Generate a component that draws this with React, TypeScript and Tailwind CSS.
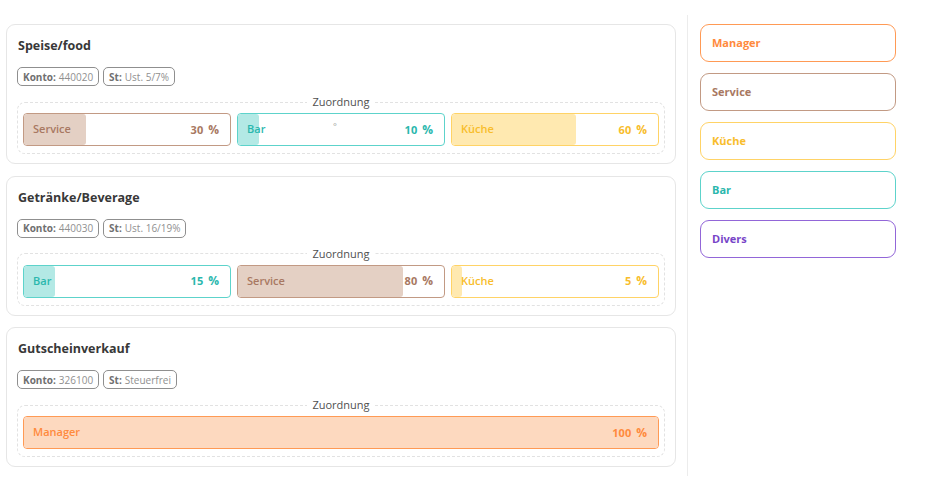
import type { ReactNode } from "react";

type Tone = "manager" | "service" | "kueche" | "bar" | "divers";

const TONES: Record<Tone, { border: string; fill: string; text: string }> = {
  manager: { border: "border-[#ff9a55]", fill: "bg-[#fdd9bf]", text: "text-[#ff8a3d]" },
  service: { border: "border-[#c29a84]", fill: "bg-[#e4d0c4]", text: "text-[#a87862]" },
  kueche: { border: "border-[#ffd366]", fill: "bg-[#ffe9b0]", text: "text-[#f8bd2c]" },
  bar: { border: "border-[#5dd3cb]", fill: "bg-[#b3e9e5]", text: "text-[#2ab7ad]" },
  divers: { border: "border-[#9266d8]", fill: "bg-[#efe6fb]", text: "text-[#7845c8]" }
};

const LABELS: Record<Tone, string> = {
  manager: "Manager",
  service: "Service",
  kueche: "Küche",
  bar: "Bar",
  divers: "Divers"
};

type Share = { tone: Tone; percent: number };

type Category = {
  title: string;
  konto: string;
  steuer: string;
  shares: Share[];
};

const CATEGORIES: Category[] = [
  {
    title: "Speise/food",
    konto: "440020",
    steuer: "Ust. 5/7%",
    shares: [
      { tone: "service", percent: 30 },
      { tone: "bar", percent: 10 },
      { tone: "kueche", percent: 60 }
    ]
  },
  {
    title: "Getränke/Beverage",
    konto: "440030",
    steuer: "Ust. 16/19%",
    shares: [
      { tone: "bar", percent: 15 },
      { tone: "service", percent: 80 },
      { tone: "kueche", percent: 5 }
    ]
  },
  {
    title: "Gutscheinverkauf",
    konto: "326100",
    steuer: "Steuerfrei",
    shares: [{ tone: "manager", percent: 100 }]
  }
];

const RIGHT: Tone[] = ["manager", "service", "kueche", "bar", "divers"];

function Tag({ label, children }: { label: string; children: ReactNode }) {
  return (
    <span className="flex h-[19px] items-center rounded-[5px] border border-[#8f8f8f] px-[5px] text-[10px] leading-none text-[#909090]">
      <span className="mr-[3px] font-bold text-[#707070]">{label}</span>
      {children}
    </span>
  );
}

function ShareBar({ share, marker }: { share: Share; marker?: boolean }) {
  const t = TONES[share.tone];
  return (
    <div
      className={`relative flex h-[33px] flex-1 items-center overflow-hidden rounded-[4px] border bg-white ${t.border}`}
    >
      <div className={`h-full shrink-0 rounded-[3px] ${t.fill}`} style={{ width: `${share.percent}%` }} />
      <div className={`absolute inset-0 flex items-center justify-between pl-[9px] pr-[11px] text-[11px] ${t.text}`}>
        <span className="font-semibold">{LABELS[share.tone]}</span>
        {marker && <span className="-mt-[6px] text-[9px] text-[#a0a0a0]">°</span>}
        <span className="font-bold">
          {share.percent}
          <span className="ml-[5px] text-[12px]">%</span>
        </span>
      </div>
    </div>
  );
}

function CategoryCard({ category, index }: { category: Category; index: number }) {
  return (
    <div className="flex h-[140px] flex-col rounded-[9px] border border-[#e6e6e6] bg-white px-[10px] pt-[13px]">
      <h3 className="pl-[1px] text-[12.5px] leading-[16px] font-bold text-[#383838]">{category.title}</h3>
      <div className="mt-[13px] flex gap-[4px]">
        <Tag label="Konto:">{category.konto}</Tag>
        <Tag label="St:">{category.steuer}</Tag>
      </div>
      <fieldset className="mt-[9px] rounded-[8px] border border-dashed border-[#e2e2e2] px-[5px] pt-[4px] pb-[7px]">
        <legend className="mx-auto px-[5px] text-[11px] leading-[14px] text-[#505050]">Zuordnung</legend>
        <div className="flex gap-[6px]">
          {category.shares.map((s, i) => (
            <ShareBar key={s.tone} share={s} marker={index === 0 && i === 1} />
          ))}
        </div>
      </fieldset>
    </div>
  );
}

export default function App() {
  return (
    <div
      className="flex h-[489px] w-[934px] bg-white pt-[15px] pl-[6px]"
      style={{ fontFamily: '"Open Sans", "Liberation Sans", sans-serif' }}
    >
      <div className="flex h-[461px] w-[682px] flex-col gap-[11.5px] border-r border-[#ececec] py-[9px] pr-[11px]">
        {CATEGORIES.map((c, i) => (
          <CategoryCard key={c.title} category={c} index={i} />
        ))}
      </div>
      <div className="flex w-[208px] flex-col gap-[11px] pt-[9px] pl-3">
        {RIGHT.map((tone) => {
          const t = TONES[tone];
          return (
            <div
              key={tone}
              className={`flex h-[38px] items-center rounded-[9px] border px-[11px] text-[11px] font-bold ${t.border} ${t.text}`}
            >
              {LABELS[tone]}
            </div>
          );
        })}
      </div>
    </div>
  );
}
